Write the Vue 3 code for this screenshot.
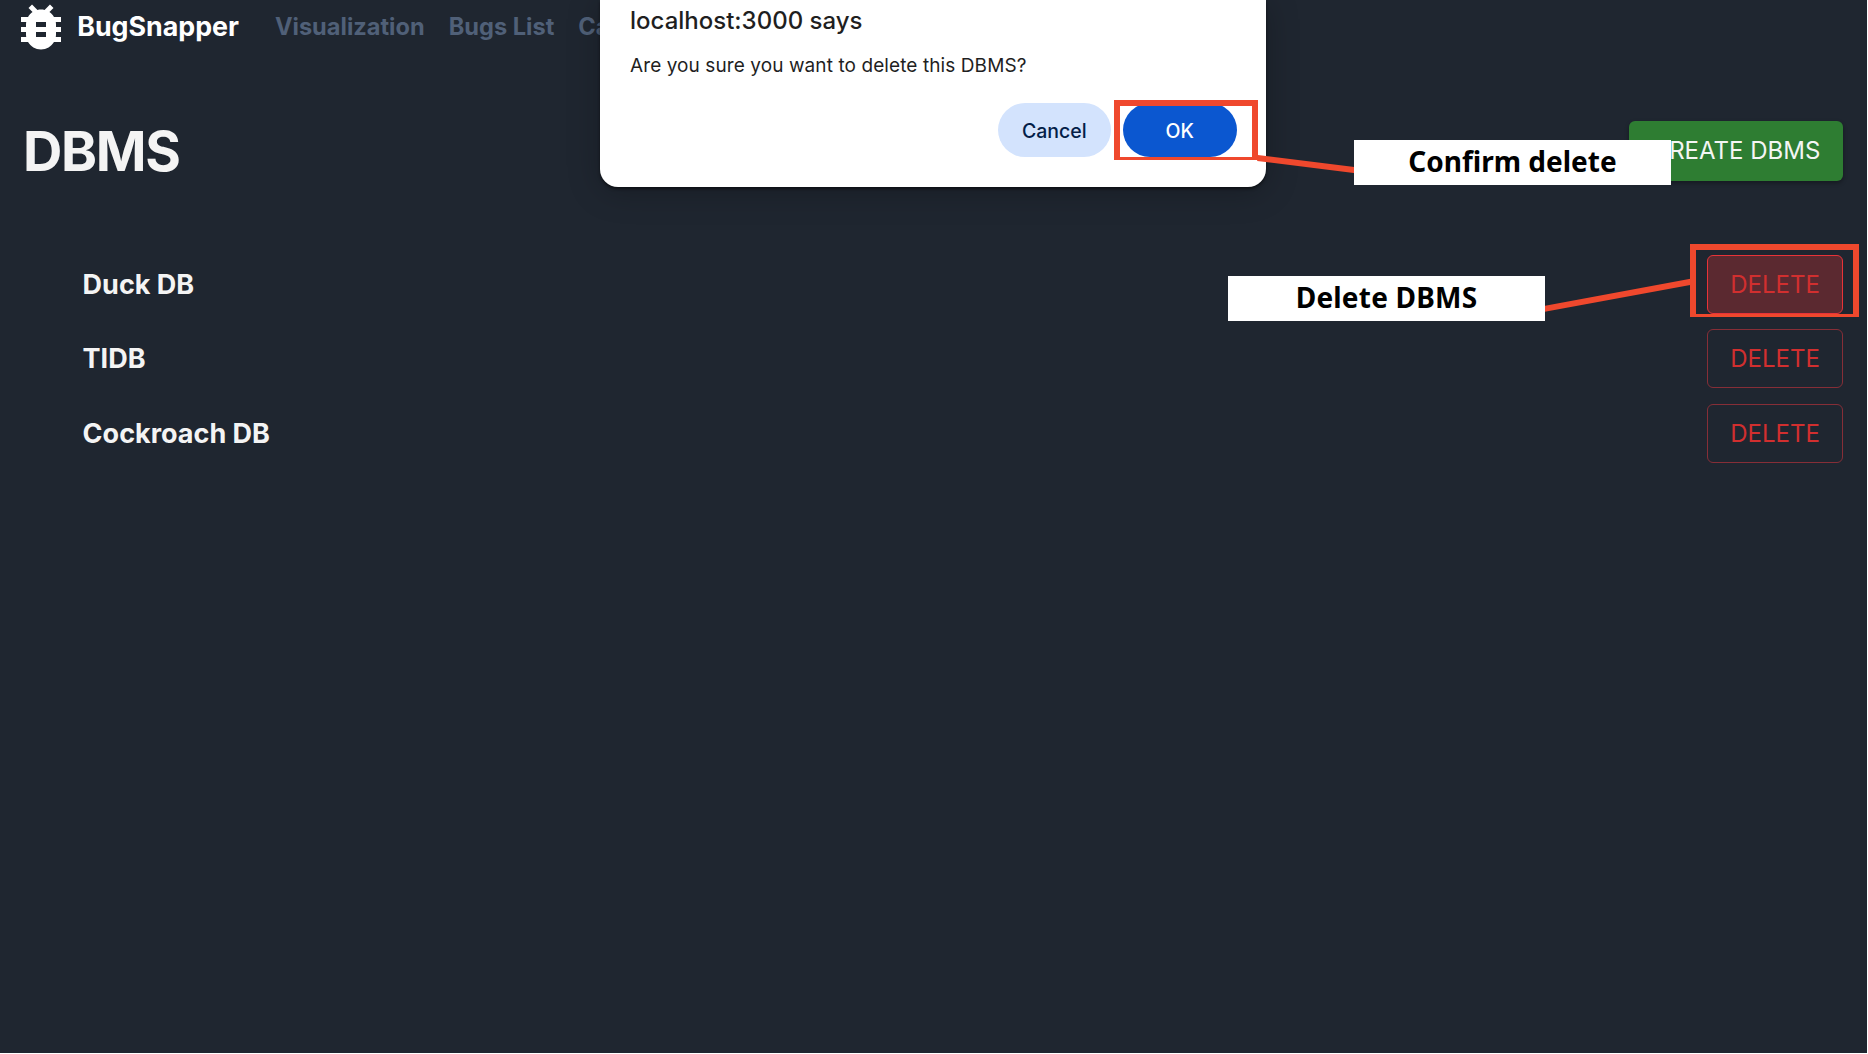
<script setup>
const links = ['Visualization', 'Bugs List', 'Ca']
const systems = [
  { name: 'Duck DB', active: true },
  { name: 'TIDB', active: false },
  { name: 'Cockroach DB', active: false },
]
</script>

<template>
  <div class="page">
    <header class="navbar">
      <svg class="logo" viewBox="0 0 24 24" fill="currentColor" aria-hidden="true">
        <path d="M20 8h-2.81c-.45-.78-1.07-1.45-1.82-1.96L17 4.41 15.59 3l-2.17 2.17C12.96 5.06 12.49 5 12 5s-.96.06-1.41.17L8.41 3 7 4.41l1.62 1.63C7.88 6.55 7.26 7.22 6.81 8H4v2h2.09c-.05.33-.09.66-.09 1v1H4v2h2v1c0 .34.04.67.09 1H4v2h2.81c1.04 1.79 2.97 3 5.19 3s4.15-1.21 5.19-3H20v-2h-2.09c.05-.33.09-.66.09-1v-1h2v-2h-2v-1c0-.34-.04-.67-.09-1H20V8zm-6 8h-4v-2h4v2zm0-4h-4v-2h4v2z" />
      </svg>
      <span class="brand">BugSnapper</span>
      <nav class="links">
        <a v-for="link in links" :key="link">{{ link }}</a>
      </nav>
    </header>

    <main>
      <div class="heading">
        <h1>DBMS</h1>
        <button class="create">CREATE DBMS</button>
      </div>
      <ul class="systems">
        <li v-for="system in systems" :key="system.name">
          <span class="name">{{ system.name }}</span>
          <button class="delete" :class="{ active: system.active }">DELETE</button>
        </li>
      </ul>
    </main>

    <div class="dialog">
      <h2>localhost:3000 says</h2>
      <p>Are you sure you want to delete this DBMS?</p>
      <div class="actions">
        <button class="cancel">Cancel</button>
        <button class="ok">OK</button>
      </div>
    </div>

    <div class="frame frame-ok"></div>
    <div class="frame frame-delete"></div>
    <svg class="connectors" viewBox="0 0 1868 1054" aria-hidden="true">
      <path d="M1257.5 158 L1356 170.2 M1543 309.1 L1691 281.8" />
    </svg>
    <div class="note note-confirm">Confirm delete</div>
    <div class="note note-delete">Delete DBMS</div>
  </div>
</template>

<style>
body {
  margin: 0;
}
</style>

<style scoped>
.page {
  position: relative;
  box-sizing: border-box;
  width: 1868px;
  height: 1054px;
  overflow: hidden;
  border: solid #fff;
  border-width: 0 1px 1px 0;
  background: #1f2630;
  color: #f4f4f4;
  font-family: Inter, sans-serif;
  font-optical-sizing: none;
}
button {
  box-sizing: border-box;
  margin: 0;
  padding: 0;
  border: 0;
  font-family: inherit;
}
.navbar {
  display: flex;
  align-items: center;
  height: 53px;
  padding-left: 10.6px;
  color: #fff;
}
.logo {
  flex: none;
  width: 60px;
  height: 60px;
}
.brand {
  width: 197.7px;
  margin-left: 6.6px;
  padding-bottom: 2px;
  font-size: 26.8px;
  font-weight: 700;
}
.links {
  display: flex;
  gap: 24px;
  color: #506078;
  font-size: 23.6px;
  font-weight: 700;
}
.heading {
  display: flex;
  align-items: center;
  justify-content: space-between;
  height: 60px;
  margin: 68px 24px 0;
}
h1 {
  margin: -1px 0 0 -1px;
  font-size: 54.5px;
  font-weight: 700;
  letter-spacing: -1.3px;
}
.create {
  width: 214px;
  height: 60px;
  padding-bottom: 1px;
  border-radius: 6px;
  background: #2e7d32;
  box-shadow: 0 2px 4px rgba(0, 0, 0, .35);
  color: #f4f6f4;
  font-size: 24px;
}
.systems {
  display: flex;
  flex-direction: column;
  gap: 15px;
  margin: 74px 24px 0 82.6px;
  padding: 0;
  list-style: none;
}
.systems li {
  display: flex;
  align-items: center;
  justify-content: space-between;
  height: 59.3px;
}
.name {
  font-size: 27px;
  font-weight: 700;
}
.delete {
  width: 136px;
  height: 59px;
  border: 1px solid #862e37;
  border-radius: 6px;
  background: transparent;
  color: #d12f2f;
  font-size: 24px;
}
.delete.active {
  border-color: #e83338;
  background: #5b2930;
}
.dialog {
  position: absolute;
  top: 0;
  left: 600px;
  box-sizing: border-box;
  width: 666px;
  height: 186.5px;
  padding: 6px 29.5px 0 30px;
  border-radius: 0 0 18px 18px;
  background: #fff;
  box-shadow: 0 2px 3px rgba(0, 0, 0, .5), 0 4px 32px rgba(0, 0, 0, .25);
  color: #1f1f1f;
}
.dialog h2 {
  margin: 0;
  font-size: 24px;
  font-weight: 500;
  line-height: 30px;
}
.dialog p {
  margin: 17px 0 0;
  font-size: 19px;
  letter-spacing: .09px;
  line-height: 26px;
}
.actions {
  display: flex;
  justify-content: flex-end;
  gap: 12px;
  margin-top: 24.4px;
}
.actions button {
  width: 113.5px;
  height: 54px;
  padding-top: 1px;
  border-radius: 27px;
  font-size: 19.5px;
  font-weight: 500;
}
.cancel {
  background: #d3e3fd;
  color: #041e49;
}
.ok {
  background: #0b57d0;
  color: #fff;
}
.frame {
  position: absolute;
  box-sizing: border-box;
  border: 6px solid #ef482d;
  border-bottom-width: 3px;
}
.frame-ok {
  top: 100px;
  left: 1114px;
  width: 144px;
  height: 60px;
}
.frame-delete {
  top: 244px;
  left: 1690px;
  width: 169px;
  height: 73px;
}
.connectors {
  position: absolute;
  top: 0;
  left: 0;
  width: 1868px;
  height: 1054px;
  fill: none;
  stroke: #ef482d;
  stroke-width: 6;
}
.note {
  position: absolute;
  width: 317px;
  height: 45px;
  background: #fff;
  color: #000;
  font-family: "Noto Sans", sans-serif;
  font-size: 28px;
  font-weight: 700;
  line-height: 43px;
  text-align: center;
}
.note-confirm {
  top: 140px;
  left: 1354px;
}
.note-delete {
  top: 276px;
  left: 1228px;
  letter-spacing: .2px;
}
</style>
